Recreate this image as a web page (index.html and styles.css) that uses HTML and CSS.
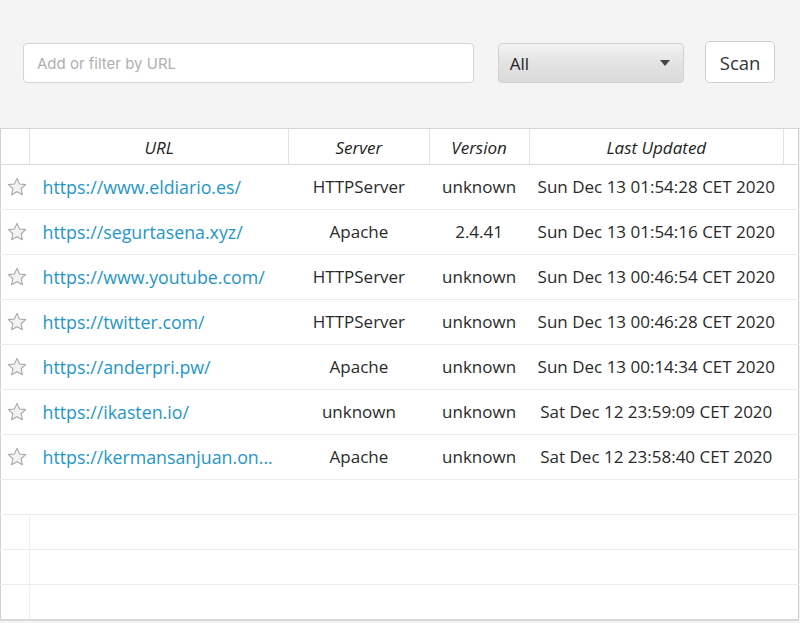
FILE: index.html
```html
<!DOCTYPE html>
<html>
<head>
<meta charset="utf-8">
<link rel="stylesheet" href="styles.css">
</head>
<body>
<div class="toolbar">
  <input class="filter" type="text" placeholder="Add or filter by URL">
  <div class="select"><span>All</span><span class="caret"></span></div>
  <button class="scan">Scan</button>
</div>
<table class="grid">
  <colgroup>
    <col class="c-star"><col class="c-url"><col class="c-server"><col class="c-version"><col class="c-date"><col class="c-gutter">
  </colgroup>
  <thead>
    <tr><th></th><th>URL</th><th>Server</th><th>Version</th><th>Last Updated</th><th></th></tr>
  </thead>
  <tbody>
    <tr><td class="star"><svg viewBox="0 0 24 24"><path d="M12 2.6l2.8 6.1 6.6.7-4.9 4.5 1.4 6.5L12 17.1l-5.9 3.3 1.4-6.5-4.9-4.5 6.6-.7z"/></svg></td><td class="url">https://www.eldiario.es/</td><td>HTTPServer</td><td>unknown</td><td>Sun Dec 13 01:54:28 CET 2020</td><td></td></tr>
    <tr><td class="star"><svg viewBox="0 0 24 24"><path d="M12 2.6l2.8 6.1 6.6.7-4.9 4.5 1.4 6.5L12 17.1l-5.9 3.3 1.4-6.5-4.9-4.5 6.6-.7z"/></svg></td><td class="url">https://segurtasena.xyz/</td><td>Apache</td><td>2.4.41</td><td>Sun Dec 13 01:54:16 CET 2020</td><td></td></tr>
    <tr><td class="star"><svg viewBox="0 0 24 24"><path d="M12 2.6l2.8 6.1 6.6.7-4.9 4.5 1.4 6.5L12 17.1l-5.9 3.3 1.4-6.5-4.9-4.5 6.6-.7z"/></svg></td><td class="url">https://www.youtube.com/</td><td>HTTPServer</td><td>unknown</td><td>Sun Dec 13 00:46:54 CET 2020</td><td></td></tr>
    <tr><td class="star"><svg viewBox="0 0 24 24"><path d="M12 2.6l2.8 6.1 6.6.7-4.9 4.5 1.4 6.5L12 17.1l-5.9 3.3 1.4-6.5-4.9-4.5 6.6-.7z"/></svg></td><td class="url">https://twitter.com/</td><td>HTTPServer</td><td>unknown</td><td>Sun Dec 13 00:46:28 CET 2020</td><td></td></tr>
    <tr><td class="star"><svg viewBox="0 0 24 24"><path d="M12 2.6l2.8 6.1 6.6.7-4.9 4.5 1.4 6.5L12 17.1l-5.9 3.3 1.4-6.5-4.9-4.5 6.6-.7z"/></svg></td><td class="url">https://anderpri.pw/</td><td>Apache</td><td>unknown</td><td>Sun Dec 13 00:14:34 CET 2020</td><td></td></tr>
    <tr><td class="star"><svg viewBox="0 0 24 24"><path d="M12 2.6l2.8 6.1 6.6.7-4.9 4.5 1.4 6.5L12 17.1l-5.9 3.3 1.4-6.5-4.9-4.5 6.6-.7z"/></svg></td><td class="url">https://ikasten.io/</td><td>unknown</td><td>unknown</td><td>Sat Dec 12 23:59:09 CET 2020</td><td></td></tr>
    <tr><td class="star"><svg viewBox="0 0 24 24"><path d="M12 2.6l2.8 6.1 6.6.7-4.9 4.5 1.4 6.5L12 17.1l-5.9 3.3 1.4-6.5-4.9-4.5 6.6-.7z"/></svg></td><td class="url">https://kermansanjuan.on...</td><td>Apache</td><td>unknown</td><td>Sat Dec 12 23:58:40 CET 2020</td><td></td></tr>
    <tr class="empty"><td></td><td></td><td></td><td></td><td></td><td></td></tr>
    <tr class="empty"><td class="vl"></td><td></td><td></td><td></td><td></td><td></td></tr>
    <tr class="empty"><td class="vl"></td><td></td><td></td><td></td><td></td><td></td></tr>
    <tr class="empty"><td class="vl"></td><td></td><td></td><td></td><td></td><td></td></tr>
  </tbody>
</table>
</body>
</html>
```

FILE: styles.css
```css
html, body {
  margin: 0;
  padding: 0;
  background: #f4f4f4;
  font-family: "Open Sans", "Liberation Sans", sans-serif;
  color: #333;
}

.toolbar {
  display: flex;
  align-items: flex-start;
  height: 129px;
  padding: 43px 25px 0 23px;
  box-sizing: border-box;
  border-bottom: 1px solid #d6d6d6;
}

.filter {
  width: 452px;
  height: 40px;
  box-sizing: border-box;
  border: 1px solid #d4d4d4;
  border-radius: 4px;
  background: #fff;
  padding: 0 13px;
  font-family: "Inter", "Open Sans", sans-serif;
  font-size: 15px;
  color: #333;
  outline: none;
}
.filter::placeholder {
  color: #b0b0b0;
}

.select {
  margin-left: 24px;
  width: 187px;
  height: 40px;
  box-sizing: border-box;
  border: 1px solid #d0d0d0;
  border-radius: 4px;
  background: linear-gradient(#f3f3f3, #e4e4e4 45%, #dadada);
  display: flex;
  align-items: center;
  justify-content: space-between;
  padding: 0 13px 0 11px;
  font-size: 17px;
  color: #222;
}
.caret {
  width: 0;
  height: 0;
  border-left: 5px solid transparent;
  border-right: 5px solid transparent;
  border-top: 6px solid #444;
}

.scan {
  margin-left: 21px;
  margin-top: -2px;
  width: 70px;
  height: 42px;
  box-sizing: border-box;
  border: 1px solid #d0d0d0;
  border-radius: 5px;
  background: #fff;
  font-family: "Open Sans", sans-serif;
  font-size: 18.5px;
  color: #333;
  padding: 0;
}

.grid {
  width: 799px;
  table-layout: fixed;
  border-collapse: collapse;
  background: #fff;
  border-left: 1px solid #cfcfcf;
  border-right: 1px solid #cfcfcf;
  border-bottom: 2px solid #d8d8d8;
}
.c-star { width: 29px; }
.c-url { width: 259px; }
.c-server { width: 140px; }
.c-version { width: 100px; }
.c-date { width: 254px; }
.c-gutter { width: 15px; }

.grid th {
  height: 35px;
  padding: 3px 0 0;
  box-sizing: border-box;
  font-weight: normal;
  font-style: italic;
  font-size: 17px;
  color: #222;
  border-right: 1px solid #e2e2e2;
  border-bottom: 1px solid #dcdcdc;
}
.grid th:last-child { border-right: none; }

.grid td {
  height: 44px;
  padding: 0;
  font-size: 17px;
  text-align: center;
  white-space: nowrap;
  overflow: hidden;
  border-bottom: 1px solid #ececec;
  color: #2a2a2a;
}
.grid td.url {
  text-align: left;
  padding-left: 13px;
  font-size: 17.8px;
  color: #1f96c8;
}
.grid td.star {
  text-align: left;
  padding-left: 5px;
}
.star svg {
  width: 22px;
  height: 22px;
  display: block;
  fill: #f2f2f2;
  stroke: #a8a8a8;
  stroke-width: 1.2;
  stroke-linejoin: round;
}
.grid tr.empty td {
  height: 34px;
  border-bottom: 1px solid #ececec;
}
.grid td.vl {
  border-right: 1px solid #efefef;
}
```
